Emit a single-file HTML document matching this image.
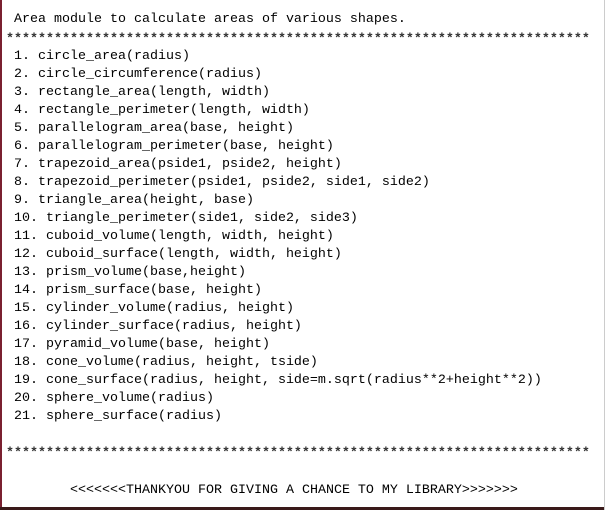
<!DOCTYPE html>
<html><head><style>
body{margin:0;width:605px;height:510px;overflow:hidden;background:#fff;position:relative}
.l{position:absolute;left:14px;font:13.33px/18px "Liberation Mono",monospace;color:#000;white-space:pre}
.s{position:absolute;left:6px;font:bold 13.33px/18px "Liberation Mono",monospace;color:#333;white-space:pre}
</style></head><body>
<div style="position:absolute;left:0;top:0;width:2px;height:510px;background:#7a2030"></div>
<div style="position:absolute;left:0;top:507px;width:605px;height:3px;background:#3a1a1a"></div>
<div style="position:absolute;right:0;top:0;width:1px;height:510px;background:#ccc"></div>
<div class="l" style="top:11px">Area module to calculate areas of various shapes.</div>
<div class="s" style="top:31px">*************************************************************************</div>
<div class="l" style="top:48px">1. circle_area(radius)
2. circle_circumference(radius)
3. rectangle_area(length, width)
4. rectangle_perimeter(length, width)
5. parallelogram_area(base, height)
6. parallelogram_perimeter(base, height)
7. trapezoid_area(pside1, pside2, height)
8. trapezoid_perimeter(pside1, pside2, side1, side2)
9. triangle_area(height, base)
10. triangle_perimeter(side1, side2, side3)
11. cuboid_volume(length, width, height)
12. cuboid_surface(length, width, height)
13. prism_volume(base,height)
14. prism_surface(base, height)
15. cylinder_volume(radius, height)
16. cylinder_surface(radius, height)
17. pyramid_volume(base, height)
18. cone_volume(radius, height, tside)
19. cone_surface(radius, height, side=m.sqrt(radius**2+height**2))
20. sphere_volume(radius)
21. sphere_surface(radius)</div>
<div class="s" style="top:445px">*************************************************************************</div>
<div class="l" style="top:482px;left:70px">&lt;&lt;&lt;&lt;&lt;&lt;&lt;THANKYOU FOR GIVING A CHANCE TO MY LIBRARY&gt;&gt;&gt;&gt;&gt;&gt;&gt;</div>
</body></html>
